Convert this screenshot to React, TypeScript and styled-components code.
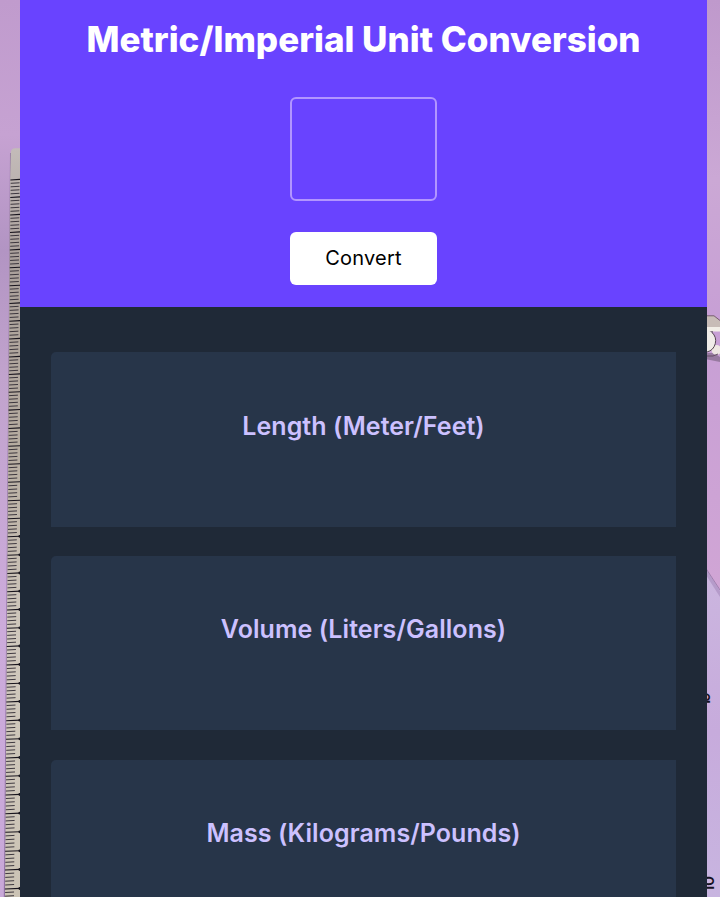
import React from "react";
import styled, { createGlobalStyle } from "styled-components";

const GlobalStyle = createGlobalStyle`
  * { box-sizing: border-box; }
  html, body { margin: 0; padding: 0; }
  body {
    font-family: Inter, "Liberation Sans", sans-serif;
    font-optical-sizing: none;
    background: #c8a5d8;
    overflow: hidden;
  }
`;

const Page = styled.div`
  position: relative;
  height: 897px;
  padding: 0 13px 0 20px;
  overflow: hidden;
`;

const Backdrop = styled.svg`
  position: absolute;
  inset: 0;
`;

const Panel = styled.main`
  position: relative;
  min-height: 100%;
  background: #1f2937;
`;

const Header = styled.header`
  display: flex;
  flex-direction: column;
  align-items: center;
  height: 307px;
  padding-top: 17px;
  background: #6943ff;
`;

const Title = styled.h1`
  margin: 0;
  font-size: 35px;
  line-height: 44px;
  font-weight: 800;
  color: #fff;
  white-space: nowrap;
`;

const ValueInput = styled.input`
  width: 147px;
  height: 104px;
  margin-top: 36px;
  padding: 0 12px;
  border: 2px solid #b295ff;
  border-radius: 6px;
  background: transparent;
  color: #fff;
  font: 800 58px Inter, sans-serif;
  text-align: center;
  outline: none;
`;

const ConvertButton = styled.button`
  width: 147px;
  height: 53px;
  margin-top: 31px;
  padding: 0 0 2px;
  border: 0;
  border-radius: 6px;
  background: #fff;
  color: #000;
  font: 400 20px/24px Inter, sans-serif;
  font-optical-sizing: none;
  letter-spacing: 0.2px;
`;

const Cards = styled.section`
  display: flex;
  flex-direction: column;
  gap: 29.2px;
  padding: 45px 31px 0;
`;

const Card = styled.article`
  height: 174.6px;
  padding-top: 57.6px;
  border-top-left-radius: 5px;
  background: #273549;
  text-align: center;
`;

const CardTitle = styled.h2`
  margin: 0;
  font-size: 25px;
  line-height: 32px;
  font-weight: 600;
  letter-spacing: 0.06px;
  color: #ccc1ff;
`;

const MAJOR_TICKS = [
  179.5, 197, 214.5, 232, 249.5, 267.3, 285.3, 303, 320.7, 338.5, 356.5, 374, 391.8,
  409.6, 428, 445.8, 463.8, 481.8, 500.3, 518.3, 536.3, 554.8, 573, 591.2, 609.5,
  627.8, 646, 664.5, 683.3, 701.5, 720.2, 738.8, 757.5, 775.8, 794.5, 813.2, 831.8,
  850.8, 869.5, 888.5, 907,
];

const edgeAt = (y: number) => 10.4 - ((y - 180) * 5.6) / 717;

function RulerTicks() {
  return (
    <g>
      {MAJOR_TICKS.slice(0, -1).map((y, i) => {
        const step = (MAJOR_TICKS[i + 1] - y) / 5;
        return (
          <g key={y}>
            <path d={`M${edgeAt(y)} ${y + 0.5}L20 ${y - 0.1}`} stroke="#18141d" strokeWidth="1.1" />
            {[1, 2, 3, 4].map((n) => {
              const ty = y + step * n;
              const x = edgeAt(ty);
              return (
                <path
                  key={n}
                  d={`M${x + 0.3} ${ty + 0.3}L${x + 9.2} ${ty - 0.2}`}
                  stroke="#2f2932"
                  strokeWidth="0.9"
                />
              );
            })}
            {y > 535 && <circle cx="19.8" cy={y} r="1.4" fill="#17141c" />}
          </g>
        );
      })}
    </g>
  );
}

function DeskScene() {
  return (
    <Backdrop width="720" height="897" viewBox="0 0 720 897" aria-hidden="true">
      <defs>
        <linearGradient id="leftPaper" x1="0" y1="0" x2="0" y2="1">
          <stop offset="0" stopColor="#c09bcd" />
          <stop offset=".15" stopColor="#c6a2d2" />
          <stop offset=".28" stopColor="#b294c3" />
          <stop offset=".42" stopColor="#c1a3cd" />
          <stop offset=".7" stopColor="#ccabdb" />
          <stop offset="1" stopColor="#c8a8d8" />
        </linearGradient>
        <linearGradient id="rightPaper" x1="0" y1="0" x2="0" y2="1">
          <stop offset="0" stopColor="#bf99cc" />
          <stop offset=".2" stopColor="#cba8d5" />
          <stop offset=".36" stopColor="#c79fd5" />
          <stop offset=".65" stopColor="#d0a5d5" />
        </linearGradient>
        <linearGradient id="lilac" x1="0" y1="0" x2="0" y2="1">
          <stop offset="0" stopColor="#cbb6df" />
          <stop offset=".5" stopColor="#c7abdc" />
          <stop offset="1" stopColor="#c8b5e0" />
        </linearGradient>
        <linearGradient id="ruler" x1="0" y1="0" x2="0" y2="1">
          <stop offset="0" stopColor="#c3bbb9" />
          <stop offset=".15" stopColor="#aaa09b" />
          <stop offset=".4" stopColor="#b6aca0" />
          <stop offset=".65" stopColor="#d0c8bd" />
          <stop offset="1" stopColor="#cbc3b5" />
        </linearGradient>
      </defs>
      <rect width="22" height="897" fill="url(#leftPaper)" />
      <path d="M10 153L9 300L3.8 897H7L12 153Z" fill="#806394" opacity=".75" />
      <path d="M10.8 153Q11 148.5 15 148.3H22V897H5L10.1 180Z" fill="url(#ruler)" />
      <RulerTicks />
      <rect x="705" width="15" height="897" fill="url(#rightPaper)" />
      <path d="M705 567L720 590V897H705Z" fill="url(#lilac)" />
      <path d="M706 569L720 591V597L706 575Z" fill="#a68bbd" opacity=".6" />
      <path d="M706 568.5L720 590" stroke="#9b7ba9" strokeWidth=".9" />
      <path d="M705 353H714L720 357V362L705 359Z" fill="#977aa0" />
      <path d="M705 316H714L720 321V328H705Z" fill="#c8bcb7" />
      <path d="M705 315.8H714L720 320.5" fill="none" stroke="#78606e" />
      <path d="M705 327H720V331.5H705Z" fill="#f2eee7" />
      <path d="M705 332H713" stroke="#302830" />
      <circle cx="716.5" cy="350" r="5" fill="#eee7e2" />
      <path d="M705 356H713L718 354" fill="none" stroke="#655064" />
      <circle cx="704" cy="341" r="11.5" fill="#f0ece8" />
      <path d="M712 332.5A11.5 11.5 0 0 1 707 352" fill="none" stroke="#564751" />
      <g fill="#171322" fontFamily="Inter, sans-serif" fontSize="15" fontWeight="600">
        <text transform="translate(709.6 706) rotate(-90)">1</text>
        <text transform="translate(709.6 701.7) rotate(-90)">9</text>
        <text transform="translate(714.4 892) rotate(-90)">1</text>
        <text transform="translate(714.4 886) rotate(-90)">0</text>
      </g>
    </Backdrop>
  );
}

const CONVERSIONS = ["Length (Meter/Feet)", "Volume (Liters/Gallons)", "Mass (Kilograms/Pounds)"];

export default function App() {
  return (
    <Page>
      <GlobalStyle />
      <DeskScene />
      <Panel>
        <Header>
          <Title>Metric/Imperial Unit Conversion</Title>
          <ValueInput aria-label="Value to convert" />
          <ConvertButton type="button">Convert</ConvertButton>
        </Header>
        <Cards>
          {CONVERSIONS.map((name) => (
            <Card key={name}>
              <CardTitle>{name}</CardTitle>
            </Card>
          ))}
        </Cards>
      </Panel>
    </Page>
  );
}
